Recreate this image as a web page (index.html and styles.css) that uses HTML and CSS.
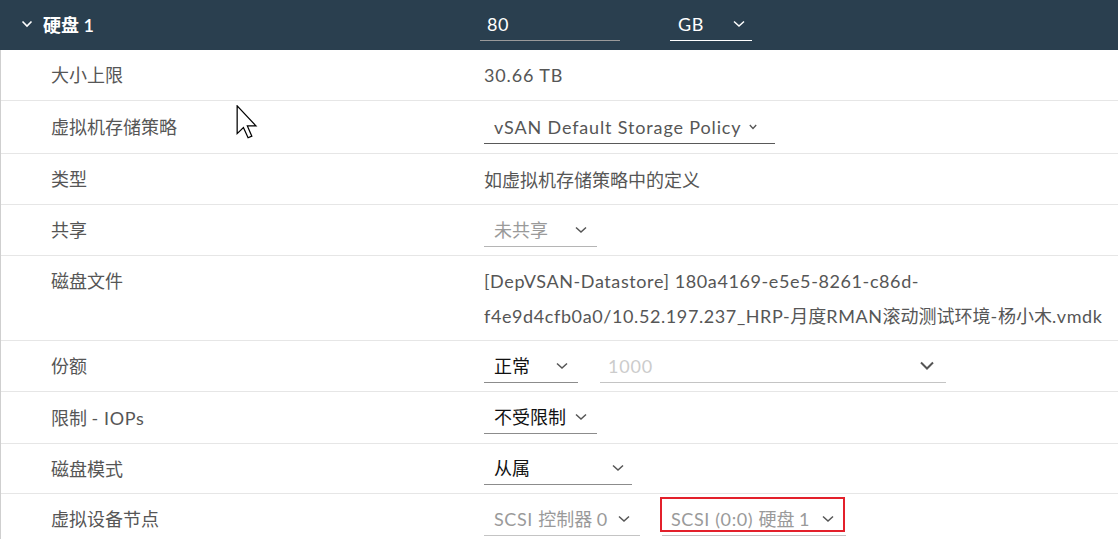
FILE: index.html
```html
<!DOCTYPE html>
<html lang="zh">
<head>
<meta charset="utf-8">
<link rel="stylesheet" href="styles.css">
</head>
<body>
<div class="panel">
  <div class="head">
    <div class="head-title">
      <svg class="chev-head" width="12" height="8" viewBox="0 0 12 8"><polyline points="1.5,1.5 6,6 10.5,1.5" fill="none" stroke="#fff" stroke-width="1.6"/></svg>
      <span class="title">硬盘 <span class="l">1</span></span>
    </div>
    <div class="head-input"><span class="l">80</span></div>
    <div class="head-sel"><span class="l">GB</span>
      <svg width="12" height="8" viewBox="0 0 12 8"><polyline points="1,1.5 6,6 11,1.5" fill="none" stroke="#fff" stroke-width="1.5"/></svg>
    </div>
  </div>

  <div class="body">
    <div class="row">
      <div class="label">大小上限</div>
      <div class="value"><span class="l lw">30.66 TB</span></div>
    </div>
    <div class="row row-52">
      <div class="label">虚拟机存储策略</div>
      <div class="value">
        <div class="sel sel-policy"><span class="l lw">vSAN Default Storage Policy</span>
          <svg width="8" height="6" viewBox="0 0 8 6"><polyline points="0.8,1 4,4.5 7.2,1" fill="none" stroke="#555" stroke-width="1.3"/></svg>
        </div>
      </div>
    </div>
    <div class="row">
      <div class="label">类型</div>
      <div class="value">如虚拟机存储策略中的定义</div>
    </div>
    <div class="row">
      <div class="label">共享</div>
      <div class="value">
        <div class="sel sel-share muted"><span>未共享</span>
          <svg width="12" height="8" viewBox="0 0 12 8"><polyline points="1,1.5 6,6 11,1.5" fill="none" stroke="#555" stroke-width="1.5"/></svg>
        </div>
      </div>
    </div>
    <div class="row row-file">
      <div class="label">磁盘文件</div>
      <div class="value file"><span class="l">[DepVSAN-Datastore] 180a4169-e5e5-8261-c86d-</span><br><span class="l">f4e9d4cfb0a0/10.52.197.237_HRP-</span>月度<span class="l">RMAN</span>滚动测试环境<span class="l">-</span>杨小木<span class="l">.vmdk</span></div>
    </div>
    <div class="row">
      <div class="label">份额</div>
      <div class="value gap">
        <div class="sel sel-shares dark"><span>正常</span>
          <svg width="12" height="8" viewBox="0 0 12 8"><polyline points="1,1.5 6,6 11,1.5" fill="none" stroke="#555" stroke-width="1.5"/></svg>
        </div>
        <div class="sel sel-num disabled"><span class="l lw">1000</span>
          <svg width="14" height="9" viewBox="0 0 14 9"><polyline points="1,1.5 7,7.5 13,1.5" fill="none" stroke="#555" stroke-width="2"/></svg>
        </div>
      </div>
    </div>
    <div class="row row-51">
      <div class="label">限制 <span class="l">- IOPs</span></div>
      <div class="value">
        <div class="sel sel-limit dark"><span>不受限制</span>
          <svg width="12" height="8" viewBox="0 0 12 8"><polyline points="1,1.5 6,6 11,1.5" fill="none" stroke="#555" stroke-width="1.5"/></svg>
        </div>
      </div>
    </div>
    <div class="row row-49">
      <div class="label">磁盘模式</div>
      <div class="value">
        <div class="sel sel-mode dark"><span>从属</span>
          <svg width="12" height="8" viewBox="0 0 12 8"><polyline points="1,1.5 6,6 11,1.5" fill="none" stroke="#555" stroke-width="1.5"/></svg>
        </div>
      </div>
    </div>
    <div class="row">
      <div class="label">虚拟设备节点</div>
      <div class="value gap">
        <div class="sel sel-ctrl muted"><span><span class="l">SCSI </span>控制器 <span class="l">0</span></span>
          <svg width="12" height="8" viewBox="0 0 12 8"><polyline points="1,1.5 6,6 11,1.5" fill="none" stroke="#555" stroke-width="1.5"/></svg>
        </div>
        <div class="sel sel-node muted"><span><span class="l">SCSI (0:0) </span>硬盘 <span class="l">1</span></span>
          <svg width="12" height="8" viewBox="0 0 12 8"><polyline points="1,1.5 6,6 11,1.5" fill="none" stroke="#555" stroke-width="1.5"/></svg>
          <div class="highlight"></div>
        </div>
      </div>
    </div>
  </div>

  <svg class="cursor" width="22" height="34" viewBox="0 0 12 19"><path d="M0.5,0.5 L0.5,16 L4,12.6 L6.6,18.3 L8.7,17.4 L6.2,11.7 L11,11.7 Z" fill="#fff" stroke="#000" stroke-width="0.7" stroke-linejoin="miter"/></svg>
</div>
</body>
</html>
```

FILE: styles.css
```css
html, body {
  margin: 0;
  padding: 0;
  background: #fff;
}
body {
  font-family: "Lato", "Noto Sans CJK SC", sans-serif;
  font-size: 18px;
  color: #565656;
  width: 1118px;
  height: 539px;
  overflow: hidden;
}
.l {
  letter-spacing: 0.6px;
}
.lw {
  letter-spacing: 0.85px;
}
.panel {
  position: relative;
}
.head {
  height: 50px;
  background: #2a3f4f;
  display: flex;
  align-items: center;
  color: #fff;
}
.head-title {
  width: 480px;
  display: flex;
  align-items: center;
  margin-bottom: 2px;
}
.chev-head {
  margin-left: 21px;
  margin-right: 10px;
}
.title {
  font-weight: 600;
  color: #fff;
}
.head-input {
  width: 133px;
  height: 32px;
  padding-left: 7px;
  border-bottom: 1px solid #9a9a9a;
  display: flex;
  align-items: center;
  margin-bottom: 2px;
  color: #fff;
  line-height: 32px;
}
.head-sel {
  margin-left: 50px;
  width: 82px;
  height: 33px;
  margin-bottom: 2px;
  border-bottom: 1px solid #fff;
  display: flex;
  align-items: center;
  justify-content: space-between;
  box-sizing: border-box;
  padding: 0 7px 0 8px;
  line-height: 32px;
}
.body {
  border-left: 1px solid #cfcfcf;
}
.row {
  display: flex;
  align-items: center;
  height: 50px;
  border-bottom: 1px solid #e6e6e6;
}
.row-52 { height: 52px; }
.row-51 { height: 51px; }
.row-49 { height: 49px; }
.row-file {
  height: 84px;
  align-items: flex-start;
}
.label {
  width: 433px;
  padding-left: 50px;
  line-height: 50px;
  flex: none;
}
.value {
  display: flex;
  align-items: center;
}
.value.gap {
  gap: 22px;
}
.file {
  display: block;
  line-height: 35px;
  padding-top: 8px;
}
.sel {
  position: relative;
  display: flex;
  align-items: center;
  justify-content: space-between;
  height: 33px;
  box-sizing: border-box;
  border-bottom: 1px solid #8c8c8c;
  padding: 0 10px 0 10px;
  line-height: 32px;
}
.sel svg { flex: none; }
.sel-policy {
  width: 291px;
  justify-content: flex-start;
  gap: 8px;
  border-bottom-color: #595959;
}
.sel-share { width: 113px; border-bottom-color: #b5b5b5; }
.sel-shares { width: 94px; }
.sel-num { width: 346px; padding: 0 12px 0 8px; border-bottom-color: #c4c4c4; }
.sel-limit { width: 113px; }
.sel-mode { width: 148px; padding-right: 8px; }
.sel-ctrl { width: 156px; border-bottom-color: #c4c4c4; }
.sel-node { width: 184px; padding: 0 12px 0 9px; border-bottom-color: #c4c4c4; }
.muted { color: #9a9a9a; }
.dark { color: #111; }
.disabled { color: #cccccc; }
.highlight {
  position: absolute;
  left: -2px;
  top: -6px;
  width: 185px;
  height: 35px;
  box-sizing: border-box;
  border: 2px solid #e3202b;
}
.cursor {
  position: absolute;
  left: 236px;
  top: 105px;
}
```
